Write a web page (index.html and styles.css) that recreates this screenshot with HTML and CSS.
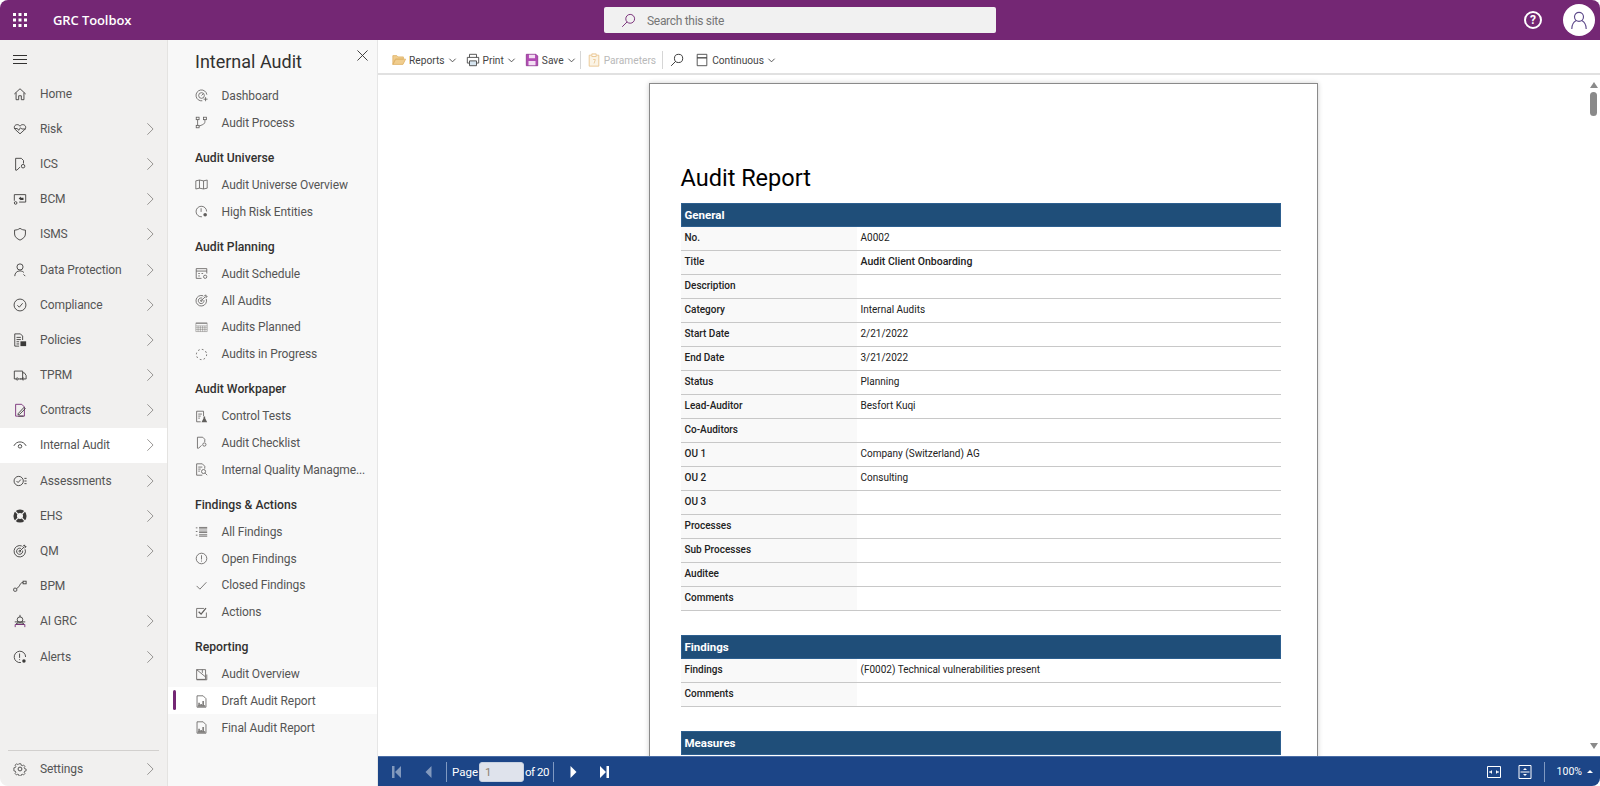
FILE: index.html
```html
<!DOCTYPE html>
<html lang="en">
<head>
  <meta charset="UTF-8">
  <title>GRC Toolbox</title>
  <link rel="stylesheet" href="styles.css">
</head>
<body>
<svg class="sprite" aria-hidden="true">
  <symbol id="i-chev" viewBox="0 0 16 16"><path d="M5 1.5 11.5 8 5 14.5"/></symbol>
  <symbol id="i-down" viewBox="0 0 10 10"><path d="M1.5 3 5 6.5 8.5 3"/></symbol>
  <symbol id="i-home" viewBox="0 0 16 16"><path d="M1.5 8 8 2l6.5 6M3.5 6.5v8h3V10h3v4.5h3v-8"/></symbol>
  <symbol id="i-heart" viewBox="0 0 16 16"><path d="M8 13.5 2.5 8.5C.3 6 2 3 4.8 3 6.3 3 7.4 3.8 8 4.8 8.6 3.8 9.7 3 11.2 3 14 3 15.7 6 13.5 8.5Z"/><path d="M1.5 7.5H5l1.5 2 2-3L10 8h4.5"/></symbol>
  <symbol id="i-ics" viewBox="0 0 16 16"><path d="M4.5 15H3V1.500h6.500L12 4v3.500M4.500 15 8 11.500"/><circle cx="11.500" cy="10.500" r="2"/></symbol>
  <symbol id="i-bcm" viewBox="0 0 16 16"><path d="M1.500 10V3h13v8.500H7"/><path class="solid" d="M6.500 7.500 9 5v1.500h3V9H9v.5Z"/><circle cx="3" cy="12.500" r="1.500"/></symbol>
  <symbol id="i-shield" viewBox="0 0 16 16"><path d="M8 1.500C6 3 4 3.500 1.800 3.500V8c0 3.500 3 5.500 6.200 7 3.200-1.500 6.200-3.500 6.200-7V3.500C12 3.500 10 3 8 1.500Z"/></symbol>
  <symbol id="i-person" viewBox="0 0 16 16"><circle cx="8" cy="4.500" r="3.500"/><path d="M2 15c0-3.500 2.500-6 6-6 2 0 3.500.8 4.500 2M14 15l-2-2"/></symbol>
  <symbol id="i-check" viewBox="0 0 16 16"><circle cx="8" cy="8" r="6.800"/><path d="m5 8.300 2.200 2.200L11 6"/></symbol>
  <symbol id="i-policy" viewBox="0 0 16 16"><path d="M2 1h6.500L11 3.500V8M2 1v14h5"/><path d="M4 5h5M4 7.500h5M4 10h3M4 12.500h3"/><rect class="solid" x="8.500" y="9.500" width="6.500" height="5.500"/></symbol>
  <symbol id="i-truck" viewBox="0 0 16 16"><path d="M3.500 12.500h-2v-9H11v9H6M11 5.500h2l2 3v4h-2M8 12.500h1"/><circle cx="4.800" cy="12.500" r="1.200"/><circle cx="11.500" cy="12.500" r="1.200"/></symbol>
  <symbol id="i-contract" viewBox="0 0 16 16"><path class="plum" d="M3 15V1.500h7l3 3V15Z"/><path d="m6 12 6.500-7L14 6.500 7.500 13h-2ZM6 15h6"/></symbol>
  <symbol id="i-eye" viewBox="0 0 16 16"><path d="M1 9c1.800-3.500 4.500-4.500 7-4.500S13.200 5.500 15 9"/><circle cx="8" cy="9.500" r="2"/></symbol>
  <symbol id="i-assess" viewBox="0 0 16 16"><circle cx="6.500" cy="8" r="5.300"/><path d="m4 8 1.800 1.800L9 6.300M13 5h2.500M13 8h2.500M13 11h2.500"/></symbol>
  <symbol id="i-buoy" viewBox="0 0 16 16"><circle class="solid" cx="8" cy="8" r="7.500"/><circle class="hole" cx="8" cy="8" r="3.500"/><path class="gap" d="m2.500 2.500 3 3M13.500 2.500l-3 3M2.500 13.500l3-3M13.500 13.500l-3-3"/></symbol>
  <symbol id="i-target" viewBox="0 0 16 16"><path d="M10 2.200A6.500 6.500 0 1 0 13.800 6M9 5.100A3.500 3.500 0 1 0 11 7.500"/><circle cx="7.800" cy="8.200" r="1"/><path d="m8 8 5-5M11 3l2-2 .5 1.500L15 3l-2 2"/></symbol>
  <symbol id="i-bpm" viewBox="0 0 16 16"><rect x=".8" y="10.500" width="3.500" height="3.500" rx="1"/><rect x="11.500" y="2.500" width="3.500" height="3"/><path d="M4.500 10.500c2-1 2.500-2 3.500-4 .5-1.500 2-2.500 3.500-2.500"/></symbol>
  <symbol id="i-robot" viewBox="0 0 16 16"><path d="M8 1v2.500"/><circle cx="8" cy="6.500" r="3.200"/><path d="M2 9h12M6 9.500l-2.500 2h9l-2.500-2"/><path class="plum" d="M2.500 15v-3h11v3"/></symbol>
  <symbol id="i-alert" viewBox="0 0 16 16"><path d="M9 14.300A6.500 6.500 0 1 1 14.400 8"/><path d="M7.500 4v5M7.500 10.500v1"/><circle class="solid" cx="12.500" cy="12.500" r="2"/></symbol>
  <symbol id="i-gear" viewBox="0 0 16 16"><circle cx="8" cy="8" r="2.200"/><path d="M6.700 1h2.600l.4 2 1.300.6 1.800-1 1.800 1.900-1 1.700.6 1.400 2 .4v2.600l-2 .4-.6 1.400 1 1.700-1.800 1.900-1.800-1-1.300.6-.4 2H6.700l-.4-2-1.300-.6-1.800 1-1.800-1.900 1-1.700-.6-1.400-2-.4V6.400l2-.4.6-1.400-1-1.700 1.800-1.900 1.800 1 1.300-.6Z" transform="translate(1.200 1.200) scale(.85)"/></symbol>
  <symbol id="i-dash" viewBox="0 0 16 16"><path d="M9 14.500A6.700 6.700 0 1 1 14.600 7"/><circle cx="8" cy="8" r="3.500"/><path d="m8 8 2-2M13 10v5M10.500 12.500h5"/></symbol>
  <symbol id="i-flow" viewBox="0 0 16 16"><rect x="1.500" y="1.500" width="3.500" height="3"/><rect x="10.500" y="1.500" width="3.500" height="3"/><rect x="1.500" y="11.500" width="3.500" height="3"/><path d="M3.200 4.500v7M12.200 4.500V7c0 1.500-1 2.800-2.500 3.500L5 12.500"/></symbol>
  <symbol id="i-map" viewBox="0 0 16 16"><path d="M1 3.500l4.500-1 5 1 4.500-1v10l-4.500 1-5-1-4.500 1ZM5.500 2.500v10M10.500 3.500v10"/></symbol>
  <symbol id="i-clockrisk" viewBox="0 0 16 16"><path d="M8.500 14.500A6.500 6.500 0 1 1 14.300 8"/><path d="M7.500 4v4.500"/><circle class="solid" cx="12.500" cy="12" r="2.200"/></symbol>
  <symbol id="i-sched" viewBox="0 0 16 16"><path d="M8 14H1.500V2h13v6M1.500 5h13M4 8h2M8 8h2M4 11h2"/><circle cx="12.500" cy="12" r="2"/></symbol>
  <symbol id="i-grid" viewBox="0 0 16 16"><path class="thin" d="M1 3h14v10H1ZM1 6h14M1 8.300h14M1 10.600h14M3.800 6v7M6.600 6v7M9.400 6v7M12.200 6v7"/><path d="M1 2.500h14"/></symbol>
  <symbol id="i-spin" viewBox="0 0 16 16"><circle class="dash" cx="8" cy="8" r="6.300"/></symbol>
  <symbol id="i-test" viewBox="0 0 16 16"><path d="M7 14.500H2v-13h8.500v6M4 5h4.500M4 7.500h3M4 10h2"/><path class="solid" d="M10.500 8h2v2l2.500 5H8l2.500-5Z"/></symbol>
  <symbol id="i-doczoom" viewBox="0 0 16 16"><path d="M9 15H2V1h7l3 3v3M4 5h5M4 7.500h3M4 10h2"/><circle cx="10.500" cy="10.500" r="2.500"/><path d="m12.500 12.500 2.500 2.500"/></symbol>
  <symbol id="i-list" viewBox="0 0 16 16"><path d="M1 3.500h2M1 8h2M1 12.500h2M5 3h10M5 4.800h10M5 7.500h10M5 9.300h10M5 12h10M5 13.800h10"/></symbol>
  <symbol id="i-info" viewBox="0 0 16 16"><circle cx="8" cy="8" r="6.500"/><path d="M8 4v5.200M8 10.500v1.300"/></symbol>
  <symbol id="i-tick" viewBox="0 0 16 16"><path d="m2 8.500 4 4 8-8.500"/></symbol>
  <symbol id="i-box" viewBox="0 0 16 16"><path d="M14 8v6H2V3h9"/><path class="heavy" d="m4.500 7 3 3 6-7.500"/></symbol>
  <symbol id="i-overview" viewBox="0 0 16 16"><path d="M2 2h11v12H2ZM2 2l11 9M9 2v4"/><path d="M2 14.500h12.500V8"/></symbol>
  <symbol id="i-report" viewBox="0 0 16 16"><path d="M2.500 15V1H10l3.500 3.500V15Z"/><path class="heavy" d="M5 13V9.500M7.500 13v-2M10 13V7.500"/><path class="heavy" d="M3.500 13.500h9"/></symbol>
  <symbol id="i-search" viewBox="0 0 16 16"><circle cx="9.800" cy="6.200" r="4.700"/><path d="M6.400 9.600 1.300 14.700"/></symbol>
  <symbol id="i-first" viewBox="0 0 10 12"><path class="solid" d="M0 0h2.500v12H0ZM9 0v12L3 6Z"/></symbol>
  <symbol id="i-prev" viewBox="0 0 10 12"><path class="solid" d="M7.500 0v12l-6-6Z"/></symbol>
  <symbol id="i-next" viewBox="0 0 10 12"><path class="solid" d="M2.500 0v12l6-6Z"/></symbol>
  <symbol id="i-last" viewBox="0 0 10 12"><path class="solid" d="M7.500 0H10v12H7.500ZM1 0v12l6-6Z"/></symbol>
</svg>

<div class="app">
  <header class="topbar">
    <div class="brand">
      <svg class="waffle" viewBox="0 0 14 14"><path d="M0 0h3v3H0zM5.500 0h3v3h-3zM11 0h3v3h-3zM0 5.500h3v3H0zM5.500 5.500h3v3h-3zM11 5.500h3v3h-3zM0 11h3v3H0zM5.500 11h3v3h-3zM11 11h3v3h-3z"/></svg>
      <span class="brand-name">GRC Toolbox</span>
    </div>
    <div class="search">
      <svg class="search-icon"><use href="#i-search"/></svg>
      <span>Search this site</span>
    </div>
    <div class="top-actions">
      <div class="help">?</div>
      <div class="avatar">
        <svg viewBox="0 0 20 20"><circle cx="10" cy="6.500" r="5"/><path d="M2 20c0-5 2-8 5-9.500M18 20c0-5-2-8-5-9.500"/></svg>
      </div>
    </div>
  </header>

  <div class="main">
    <nav class="rail">
      <div class="rail-burger"><span></span><span></span><span></span></div>
      <div class="rail-list">
        <div class="rail-item"><svg class="ico"><use href="#i-home"/></svg><span>Home</span></div>
        <div class="rail-item"><svg class="ico"><use href="#i-heart"/></svg><span>Risk</span><svg class="chev"><use href="#i-chev"/></svg></div>
        <div class="rail-item"><svg class="ico"><use href="#i-ics"/></svg><span>ICS</span><svg class="chev"><use href="#i-chev"/></svg></div>
        <div class="rail-item"><svg class="ico"><use href="#i-bcm"/></svg><span>BCM</span><svg class="chev"><use href="#i-chev"/></svg></div>
        <div class="rail-item"><svg class="ico"><use href="#i-shield"/></svg><span>ISMS</span><svg class="chev"><use href="#i-chev"/></svg></div>
        <div class="rail-item"><svg class="ico"><use href="#i-person"/></svg><span>Data Protection</span><svg class="chev"><use href="#i-chev"/></svg></div>
        <div class="rail-item"><svg class="ico"><use href="#i-check"/></svg><span>Compliance</span><svg class="chev"><use href="#i-chev"/></svg></div>
        <div class="rail-item"><svg class="ico"><use href="#i-policy"/></svg><span>Policies</span><svg class="chev"><use href="#i-chev"/></svg></div>
        <div class="rail-item"><svg class="ico"><use href="#i-truck"/></svg><span>TPRM</span><svg class="chev"><use href="#i-chev"/></svg></div>
        <div class="rail-item"><svg class="ico"><use href="#i-contract"/></svg><span>Contracts</span><svg class="chev"><use href="#i-chev"/></svg></div>
        <div class="rail-item active"><svg class="ico"><use href="#i-eye"/></svg><span>Internal Audit</span><svg class="chev"><use href="#i-chev"/></svg></div>
        <div class="rail-item"><svg class="ico"><use href="#i-assess"/></svg><span>Assessments</span><svg class="chev"><use href="#i-chev"/></svg></div>
        <div class="rail-item"><svg class="ico"><use href="#i-buoy"/></svg><span>EHS</span><svg class="chev"><use href="#i-chev"/></svg></div>
        <div class="rail-item"><svg class="ico"><use href="#i-target"/></svg><span>QM</span><svg class="chev"><use href="#i-chev"/></svg></div>
        <div class="rail-item"><svg class="ico"><use href="#i-bpm"/></svg><span>BPM</span></div>
        <div class="rail-item"><svg class="ico"><use href="#i-robot"/></svg><span>AI GRC</span><svg class="chev"><use href="#i-chev"/></svg></div>
        <div class="rail-item"><svg class="ico"><use href="#i-alert"/></svg><span>Alerts</span><svg class="chev"><use href="#i-chev"/></svg></div>
      </div>
      <div class="rail-foot">
        <div class="rail-item"><svg class="ico"><use href="#i-gear"/></svg><span>Settings</span><svg class="chev"><use href="#i-chev"/></svg></div>
      </div>
    </nav>

    <aside class="panel">
      <div class="panel-head">
        <h1>Internal Audit</h1>
        <svg class="panel-close" viewBox="0 0 12 12"><path d="m.5.5 11 11M11.500.5l-11 11"/></svg>
      </div>
      <div class="panel-item"><svg class="pico"><use href="#i-dash"/></svg><span>Dashboard</span></div>
      <div class="panel-item"><svg class="pico"><use href="#i-flow"/></svg><span>Audit Process</span></div>

      <h2 class="panel-title">Audit Universe</h2>
      <div class="panel-item"><svg class="pico"><use href="#i-map"/></svg><span>Audit Universe Overview</span></div>
      <div class="panel-item"><svg class="pico"><use href="#i-clockrisk"/></svg><span>High Risk Entities</span></div>

      <h2 class="panel-title">Audit Planning</h2>
      <div class="panel-item"><svg class="pico"><use href="#i-sched"/></svg><span>Audit Schedule</span></div>
      <div class="panel-item"><svg class="pico"><use href="#i-target"/></svg><span>All Audits</span></div>
      <div class="panel-item"><svg class="pico"><use href="#i-grid"/></svg><span>Audits Planned</span></div>
      <div class="panel-item"><svg class="pico"><use href="#i-spin"/></svg><span>Audits in Progress</span></div>

      <h2 class="panel-title">Audit Workpaper</h2>
      <div class="panel-item"><svg class="pico"><use href="#i-test"/></svg><span>Control Tests</span></div>
      <div class="panel-item"><svg class="pico"><use href="#i-ics"/></svg><span>Audit Checklist</span></div>
      <div class="panel-item"><svg class="pico"><use href="#i-doczoom"/></svg><span>Internal Quality Managme...</span></div>

      <h2 class="panel-title">Findings &amp; Actions</h2>
      <div class="panel-item"><svg class="pico"><use href="#i-list"/></svg><span>All Findings</span></div>
      <div class="panel-item"><svg class="pico"><use href="#i-info"/></svg><span>Open Findings</span></div>
      <div class="panel-item"><svg class="pico"><use href="#i-tick"/></svg><span>Closed Findings</span></div>
      <div class="panel-item"><svg class="pico"><use href="#i-box"/></svg><span>Actions</span></div>

      <h2 class="panel-title">Reporting</h2>
      <div class="panel-item"><svg class="pico"><use href="#i-overview"/></svg><span>Audit Overview</span></div>
      <div class="panel-item active"><svg class="pico"><use href="#i-report"/></svg><span>Draft Audit Report</span></div>
      <div class="panel-item"><svg class="pico"><use href="#i-report"/></svg><span>Final Audit Report</span></div>
    </aside>

    <section class="content">
      <div class="toolbar">
        <div class="tool">
          <svg class="tico" viewBox="0 0 16 16"><path class="folder" d="M1 13V3h4.500L7 4.500h6V7H4l-3 6h11.500l3-6H4Z"/></svg>
          <span>Reports</span><svg class="tdown"><use href="#i-down"/></svg>
        </div>
        <div class="tool">
          <svg class="tico" viewBox="0 0 16 16"><path class="line" d="M4 5V1.500h8V5M4 11.500H1.500V5h13v6.500H12"/><path class="tint" d="M4 9h8v5.500H4Z"/></svg>
          <span>Print</span><svg class="tdown"><use href="#i-down"/></svg>
        </div>
        <div class="tool before-sep">
          <svg class="tico" viewBox="0 0 16 16"><path class="save" d="M1.500 1.500h11l2 2v11h-13Z"/><path class="save-in" d="M4.500 2h7v4h-7ZM4 9h8v5H4Z"/></svg>
          <span>Save</span><svg class="tdown"><use href="#i-down"/></svg>
        </div>
        <div class="tool-sep"></div>
        <div class="tool disabled">
          <svg class="tico" viewBox="0 0 16 16"><path class="clip-ic" d="M5 2.500H2.500V15h11V2.500H11M5.500 1h5v3h-5ZM7 7.500h2.500L8 12"/></svg>
          <span>Parameters</span>
        </div>
        <div class="tool-sep wide"></div>
        <svg class="tool-search"><use href="#i-search"/></svg>
        <div class="tool">
          <svg class="tico" viewBox="0 0 16 16"><path class="line" d="M2.500 1.500h11v4h-11ZM2.500 5.500h11v9h-11Z"/></svg>
          <span>Continuous</span><svg class="tdown"><use href="#i-down"/></svg>
        </div>
      </div>

      <div class="viewer">
        <div class="stage">
          <article class="page">
            <h3 class="report-title">Audit Report</h3>

            <div class="band">General</div>
            <div class="row"><div class="key">No.</div><div class="val">A0002</div></div>
            <div class="row"><div class="key">Title</div><div class="val strong">Audit Client Onboarding</div></div>
            <div class="row"><div class="key">Description</div><div class="val"></div></div>
            <div class="row"><div class="key">Category</div><div class="val">Internal Audits</div></div>
            <div class="row"><div class="key">Start Date</div><div class="val">2/21/2022</div></div>
            <div class="row"><div class="key">End Date</div><div class="val">3/21/2022</div></div>
            <div class="row"><div class="key">Status</div><div class="val">Planning</div></div>
            <div class="row"><div class="key">Lead-Auditor</div><div class="val">Besfort Kuqi</div></div>
            <div class="row"><div class="key">Co-Auditors</div><div class="val"></div></div>
            <div class="row"><div class="key">OU 1</div><div class="val">Company (Switzerland) AG</div></div>
            <div class="row"><div class="key">OU 2</div><div class="val">Consulting</div></div>
            <div class="row"><div class="key">OU 3</div><div class="val"></div></div>
            <div class="row"><div class="key">Processes</div><div class="val"></div></div>
            <div class="row"><div class="key">Sub Processes</div><div class="val"></div></div>
            <div class="row"><div class="key">Auditee</div><div class="val"></div></div>
            <div class="row"><div class="key">Comments</div><div class="val"></div></div>

            <div class="band spaced">Findings</div>
            <div class="row"><div class="key">Findings</div><div class="val">(F0002) Technical vulnerabilities present</div></div>
            <div class="row"><div class="key">Comments</div><div class="val"></div></div>

            <div class="band spaced">Measures</div>
          </article>
        </div>
        <div class="scrollbar">
          <span class="arrow up"></span>
          <span class="thumb"></span>
          <span class="arrow down"></span>
        </div>
      </div>

      <div class="pager">
        <svg class="pbtn dim"><use href="#i-first"/></svg>
        <svg class="pbtn dim"><use href="#i-prev"/></svg>
        <div class="pager-sep first"></div>
        <span class="pager-label">Page</span>
        <div class="pager-input">1</div>
        <span class="pager-of">of 20</span>
        <div class="pager-sep second"></div>
        <svg class="pbtn"><use href="#i-next"/></svg>
        <svg class="pbtn"><use href="#i-last"/></svg>
        <div class="pager-right">
          <svg class="pfit" viewBox="0 0 14 14"><path d="M.5 1.500h13v11H.5ZM2 7h3M9 7h3"/><path class="pfill" d="M5 5v4L3 7ZM9 5v4l2-2Z"/></svg>
          <svg class="pfit second" viewBox="0 0 14 14"><path d="M1 .5h12v13H1ZM2.500 7h9"/><path class="pfill" d="M5 5h4L7 3ZM5 9h4l-2 2Z"/></svg>
          <div class="pager-sep"></div>
          <span class="zoom">100%</span>
          <span class="zoom-caret"></span>
        </div>
      </div>
    </section>
  </div>
</div>
</body>
</html>
```

FILE: styles.css
```css
* {
  box-sizing: border-box;
}

html, body {
  height: 100%;
  margin: 0;
}

body {
  background: #fff;
  font-family: Roboto, "Open Sans", sans-serif;
  font-size: 13px;
  color: #323130;
  overflow: hidden;
}

.sprite {
  display: none;
}

symbol path, symbol circle, symbol rect {
  fill: none;
  stroke: currentColor;
  stroke-width: 1;
}

symbol .solid {
  fill: currentColor;
  stroke: none;
}

symbol .hole {
  fill: #f3f2f1;
  stroke: none;
}

symbol .gap {
  stroke: #f3f2f1;
  stroke-width: 1.4;
}

symbol .plum {
  stroke: #742774;
}

symbol .heavy {
  stroke-width: 1.6;
}

symbol .thin {
  stroke-width: .5;
}

symbol .dash {
  stroke-dasharray: 2 2.9;
  stroke-width: 1.2;
}

.app {
  height: 786px;
  display: flex;
  flex-direction: column;
  border-radius: 8px;
  overflow: hidden;
}

/* top bar */
.topbar {
  height: 40px;
  flex: none;
  background: #742774;
  display: flex;
  align-items: center;
  position: relative;
  color: #fff;
}

.brand {
  display: flex;
  align-items: center;
  padding-left: 13px;
}

.waffle {
  width: 14px;
  height: 14px;
  fill: #fff;
}

.brand-name {
  margin-left: 26px;
  font-family: "Open Sans", sans-serif;
  font-size: 13px;
  font-weight: 600;
  letter-spacing: -.1px;
}

.search {
  position: absolute;
  left: 604px;
  top: 7px;
  width: 392px;
  height: 26px;
  background: #f1f1f1;
  border-radius: 2px;
  display: flex;
  align-items: center;
  padding: 1px 0 0 17px;
  color: #767676;
  font-size: 12px;
  letter-spacing: -.3px;
}

.search-icon {
  width: 15px;
  height: 15px;
  color: #742774;
  margin-right: 11px;
}

.top-actions {
  margin-left: auto;
  display: flex;
  align-items: center;
  padding-right: 5px;
}

.help {
  width: 18px;
  height: 18px;
  border: 2px solid #fff;
  border-radius: 50%;
  font-size: 12px;
  font-weight: 700;
  line-height: 14px;
  text-align: center;
}

.avatar {
  width: 32px;
  height: 32px;
  margin-left: 21px;
  background: #fff;
  border-radius: 50%;
  display: flex;
  align-items: center;
  justify-content: center;
}

.avatar svg {
  width: 18px;
  height: 18px;
  fill: none;
  stroke: #5f4b8b;
  stroke-width: 1.3;
}

/* rail */
.main {
  flex: 1;
  min-height: 0;
  display: flex;
}

.rail {
  width: 168px;
  flex: none;
  background: #f1f0ef;
  border-right: 1px solid #e4e3e1;
  display: flex;
  flex-direction: column;
}

.rail-burger {
  height: 36px;
  flex: none;
  display: flex;
  flex-direction: column;
  justify-content: center;
  gap: 3px;
  padding: 2px 0 0 13px;
}

.rail-burger span {
  display: block;
  width: 14px;
  height: 1px;
  background: #323130;
}

.rail-list {
  flex: 1;
}

.rail-item {
  height: 35.2px;
  display: flex;
  align-items: center;
  padding-left: 13px;
  color: #555;
  font-size: 12px;
  letter-spacing: -.1px;
}

.rail-item span {
  margin-left: 13px;
}

.rail-item.active {
  background: #fff;
}

.ico {
  width: 14px;
  height: 14px;
  flex: none;
  color: #3b3a39;
}

.chev {
  width: 14px;
  height: 14px;
  margin-left: auto;
  margin-right: 10px;
  color: #8a8886;
}

.rail-foot {
  height: 36px;
  flex: none;
  margin: 0 8px;
  border-top: 1px solid #d2d0ce;
}

.rail-foot .rail-item {
  margin: 0 -8px;
}

/* group panel */
.panel {
  width: 210px;
  flex: none;
  background: #f8f8f8;
  border-right: 1px solid #e6e6e6;
}

.panel-head {
  height: 42px;
  position: relative;
  padding-left: 27px;
  display: flex;
  align-items: center;
}

.panel-head h1 {
  margin: 0;
  font-size: 18px;
  font-weight: 400;
  color: #323130;
}

.panel-close {
  position: absolute;
  right: 9px;
  top: 10px;
  width: 11px;
  height: 11px;
  fill: none;
  stroke: #323130;
}

.panel-item {
  height: 26.75px;
  display: flex;
  align-items: center;
  padding: 1px 0 0 27px;
  position: relative;
  color: #555;
  font-size: 12px;
  letter-spacing: -.1px;
}

.panel-item span {
  margin-left: 13.5px;
  white-space: nowrap;
}

.panel-item.active {
  background: #fff;
}

.panel-item.active::before {
  content: "";
  position: absolute;
  left: 5px;
  top: 3px;
  width: 3px;
  height: 20px;
  border-radius: 2px;
  background: #742774;
}

.panel-title {
  height: 26.75px;
  margin: 8.7px 0 0;
  padding-left: 27px;
  display: flex;
  align-items: center;
  font-size: 12.2px;
  font-weight: 500;
  color: #323130;
}

.pico {
  width: 13px;
  height: 13px;
  flex: none;
  color: #605e5c;
}

/* report toolbar */
.content {
  flex: 1;
  min-width: 0;
  display: flex;
  flex-direction: column;
}

.toolbar {
  height: 35px;
  flex: none;
  display: flex;
  align-items: center;
  padding: 7px 0 0 14px;
  border-bottom: 2px solid #e1e1e1;
  font-size: 10.2px;
  color: #444;
}

.tool {
  display: flex;
  align-items: center;
  margin-right: 9px;
}

.tool.before-sep {
  margin-right: 4px;
}

.tool.disabled {
  color: #b8b8b8;
  margin-right: 6px;
}

.tico {
  width: 14px;
  height: 14px;
  margin-right: 3px;
  fill: none;
}

.tdown {
  width: 9px;
  height: 9px;
  margin-left: 3px;
  color: #444;
}

.folder {
  fill: #f0cd8e;
  stroke: #e0b56a;
}

.line {
  fill: none;
  stroke: #444;
}

.tint {
  fill: #d6e4ef;
  stroke: #444;
}

.save {
  fill: #b24bb4;
  stroke: #8f3a91;
}

.save-in {
  fill: #f3dff3;
  stroke: none;
}

.clip-ic {
  fill: #fbf4e6;
  stroke: #e9c48d;
}

.tool-sep {
  width: 1px;
  height: 18px;
  background: #d6d6d6;
  margin-right: 6px;
}

.tool-sep.wide {
  margin-right: 7px;
}

.tool-search {
  width: 14px;
  height: 14px;
  margin-right: 11px;
  color: #222;
}

/* report viewer */
.viewer {
  flex: 1;
  min-height: 0;
  display: flex;
  background: #fff;
}

.stage {
  flex: 1;
  min-width: 0;
  overflow: hidden;
  display: flex;
  justify-content: center;
  padding: 8px 0 0 2px;
}

.page {
  width: 669px;
  height: 900px;
  flex: none;
  border: 1px solid #8a8a8a;
  box-shadow: 0 0 5px rgba(0, 0, 0, .2);
  padding: 0 36px 0 31px;
  background: #fff;
}

.report-title {
  margin: 74px 0 0;
  height: 45px;
  font-size: 23.5px;
  line-height: 40px;
  font-weight: 400;
  color: #000;
}

.band {
  height: 24px;
  background: #1f4e79;
  border: 1px solid #2d5f8f;
  color: #fff;
  font-size: 11.5px;
  font-weight: 700;
  line-height: 22px;
  padding-left: 3px;
}

.band.spaced {
  margin-top: 24px;
}

.row {
  height: 24px;
  display: flex;
  border-bottom: 1px solid #c8c8c8;
  font-size: 10px;
  line-height: 22px;
  color: #222;
}

.key {
  width: 176px;
  flex: none;
  background: #f9f9f9;
  padding-left: 4px;
  font-weight: 500;
}

.val {
  padding-left: 4px;
}

.val.strong {
  font-size: 10.5px;
  font-weight: 500;
}

.scrollbar {
  width: 14px;
  flex: none;
  display: flex;
  flex-direction: column;
  align-items: center;
  padding: 7px 0 7px 1px;
}

.arrow {
  width: 0;
  height: 0;
  border-left: 4px solid transparent;
  border-right: 4px solid transparent;
}

.arrow.up {
  border-bottom: 6px solid #8a8a8a;
}

.arrow.down {
  border-top: 6px solid #8a8a8a;
  margin-top: auto;
}

.thumb {
  width: 7px;
  height: 24px;
  margin-top: 4px;
  border-radius: 4px;
  background: #8a8a8a;
}

/* pager */
.pager {
  height: 30px;
  flex: none;
  display: flex;
  align-items: center;
  background: #1c4587;
  border-top: 1px solid #4a6da5;
  color: #fff;
  font-size: 11.5px;
  padding-left: 14px;
}

.pbtn {
  width: 10px;
  height: 12px;
  color: #fff;
  margin-right: 21px;
}

.pbtn.dim {
  margin-right: 22px;
  opacity: .45;
}

.pager-sep {
  width: 1px;
  height: 20px;
  background: #7f99c2;
}

.pager-sep.first {
  margin-left: -10px;
}

.pager-sep.second {
  margin-right: 14px;
}

.pager-label {
  margin-left: 5px;
}

.pager-input {
  width: 45px;
  height: 20px;
  margin-left: 1px;
  padding-left: 5px;
  background: #dfe3ec;
  border-radius: 3px;
  border: 1px solid #c8d1e0;
  color: #8d7f6e;
  line-height: 18px;
}

.pager-of {
  margin: 0 4px 0 1px;
  letter-spacing: -.5px;
}

.pager-right {
  margin-left: auto;
  display: flex;
  align-items: center;
  padding-right: 7px;
}

.pfit {
  width: 14px;
  height: 14px;
  margin-right: 17px;
  fill: none;
  stroke: #fff;
  stroke-width: 1;
}

.pfit.second {
  margin-right: 12px;
}

.pfill {
  fill: #fff;
  stroke: none;
}

.zoom {
  margin-left: 12px;
  font-size: 10.5px;
}

.zoom-caret {
  width: 0;
  height: 0;
  margin-left: 5px;
  border-left: 3px solid transparent;
  border-right: 3px solid transparent;
  border-bottom: 3px solid #fff;
}
```
